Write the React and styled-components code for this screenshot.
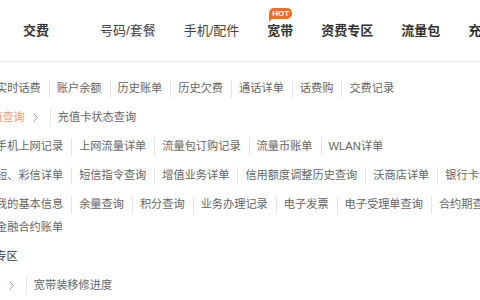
import styled, { createGlobalStyle } from "styled-components";

const GlobalStyle = createGlobalStyle`
  html, body {
    margin: 0;
    padding: 0;
    background: #fff;
  }
  body {
    font-family: "Liberation Sans", "Noto Sans CJK SC", sans-serif;
  }
`;

const Page = styled.div`
  width: 480px;
  height: 300px;
  overflow: hidden;
  background: #fff;
`;

const NavBar = styled.nav`
  display: flex;
  align-items: center;
  height: 61px;
  padding-left: 23px;
  border-bottom: 1px solid #e8e8e8;
  white-space: nowrap;
`;

const NavItem = styled.a`
  position: relative;
  margin-right: 28px;
  font-size: 13px;
  line-height: 18px;
  font-weight: ${(p) => (p.$bold ? 700 : 400)};
  color: ${(p) => (p.$bold ? "#333" : "#444")};
  text-decoration: none;
`;

const NavDivider = styled.span`
  width: 1px;
  height: 17px;
  margin-right: 23px;
  background: #dedede;
`;

const Badge = styled.span`
  position: absolute;
  left: 2px;
  top: -14px;
  height: 11px;
  padding: 0 3px;
  border-radius: 5px 5px 5px 1px;
  background: #ff6d1a;
  color: #fff;
  font-size: 8px;
  line-height: 11px;
  font-weight: 700;
  &::after {
    content: "";
    position: absolute;
    left: 0;
    bottom: -3px;
    border-left: 4px solid #ff6d1a;
    border-bottom: 4px solid transparent;
  }
`;

const Panel = styled.div`
  width: 560px;
  padding-top: 12px;
`;

const Row = styled.div`
  display: flex;
  flex-wrap: wrap;
  align-items: center;
  margin-left: ${(p) => p.$shift}px;
  padding: 3px 0;
  font-size: 11.2px;
  line-height: 23px;
  color: #666;
  white-space: nowrap;
`;

const Item = styled.a`
  position: relative;
  padding: 0 8px;
  color: #666;
  text-decoration: none;
  &:not(:first-child)::before {
    content: "";
    position: absolute;
    left: 0;
    top: 50%;
    width: 1px;
    height: 18px;
    margin-top: -9px;
    background: #e6e6e6;
  }
`;

const TitleLink = styled.a`
  display: flex;
  align-items: center;
  gap: 8px;
  padding: 0 12px 0 8px;
  color: #f39a6b;
  text-decoration: none;
`;

const Heading = styled.div`
  margin-left: ${(p) => p.$shift}px;
  padding: 3px 0;
  font-size: 11.2px;
  line-height: 23px;
  color: #333;
  white-space: nowrap;
`;

const Chevron = () => (
  <svg width="5" height="9" viewBox="0 0 5 9">
    <path d="M0.6 0.6 L4.3 4.5 L0.6 8.4" fill="none" stroke="#9a9a9a" strokeWidth="1" />
  </svg>
);

const nav = [
  { label: "号码/套餐" },
  { label: "手机/配件" },
  { label: "宽带", bold: true, hot: true },
  { label: "资费专区", bold: true },
  { label: "流量包", bold: true },
  { label: "充值", bold: true },
];

const rows = [
  ["实时话费", "账户余额", "历史账单", "历史欠费", "通话详单", "话费购", "交费记录"],
  ["手机上网记录", "上网流量详单", "流量包订购记录", "流量币账单", "WLAN详单"],
  ["短、彩信详单", "短信指令查询", "增值业务详单", "信用额度调整历史查询", "沃商店详单", "银行卡详单"],
  ["我的基本信息", "余量查询", "积分查询", "业务办理记录", "电子发票", "电子受理单查询", "合约期查询", "金融合约账单"],
];

function App() {
  return (
    <Page>
      <GlobalStyle />
      <NavBar>
        <NavItem $bold>交费</NavItem>
        <NavDivider />
        {nav.map((n) => (
          <NavItem key={n.label} $bold={n.bold}>
            {n.hot && <Badge>HOT</Badge>}
            {n.label}
          </NavItem>
        ))}
      </NavBar>
      <Panel>
        <Row $shift={-12}>
          {rows[0].map((t) => (
            <Item key={t}>{t}</Item>
          ))}
        </Row>
        <Row $shift={-28}>
          <TitleLink>
            充值查询
            <Chevron />
          </TitleLink>
          <Item>充值卡状态查询</Item>
        </Row>
        {rows.slice(1).map((r, i) => (
          <Row key={i} $shift={-12}>
            {r.map((t) => (
              <Item key={t}>{t}</Item>
            ))}
          </Row>
        ))}
        <Heading $shift={-27}>宽带专区</Heading>
        <Row $shift={-52}>
          <TitleLink>
            宽带进度
            <Chevron />
          </TitleLink>
          <Item>宽带装移修进度</Item>
        </Row>
      </Panel>
    </Page>
  );
}

export default App;
